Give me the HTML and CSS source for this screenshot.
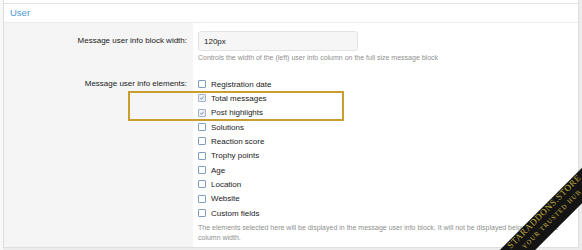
FILE: index.html
```html
<!DOCTYPE html>
<html>
<head>
    <title>Options: Messages</title>
    <link rel="stylesheet" href="styles.css">
</head>
<body>

<div class="page">
    <div class="prev-block"></div>
    <h3 class="section-head">User</h3>

    <dl class="form-row row-width">
        <dt><label for="infoWidth">Message user info block width:</label></dt>
        <dd>
            <input type="text" id="infoWidth" class="text-input" value="120px">
            <div class="hint">Controls the width of the (left) user info column on the full size message block</div>
        </dd>
    </dl>

    <dl class="form-row row-elements">
        <dt><label>Message user info elements:</label></dt>
        <dd>
            <ul class="check-list">
                <li><span class="box"></span>Registration date</li>
                <li><span class="box checked"><svg viewBox="0 0 8 8"><path d="M1.6 4.2 L3.3 5.8 L6.4 2.2"/></svg></span>Total messages</li>
                <li><span class="box checked"><svg viewBox="0 0 8 8"><path d="M1.6 4.2 L3.3 5.8 L6.4 2.2"/></svg></span>Post highlights</li>
                <li><span class="box"></span>Solutions</li>
                <li><span class="box"></span>Reaction score</li>
                <li><span class="box"></span>Trophy points</li>
                <li><span class="box"></span>Age</li>
                <li><span class="box"></span>Location</li>
                <li><span class="box"></span>Website</li>
                <li><span class="box"></span>Custom fields</li>
            </ul>
            <div class="hint">The elements selected here will be displayed in the message user info block. It will not be displayed below the single column width.</div>
        </dd>
    </dl>
</div>

<!-- annotation + watermark on top of the screenshot -->
<div class="highlight"></div>
<div class="ribbon">
    <span class="ribbon-title">STARADDONS.STORE</span>
    <span class="ribbon-sub">YOUR TRUSTED HUB</span>
</div>

</body>
</html>
```

FILE: styles.css
```css
html, body {
    height: 100%;
}
body {
    margin: 0;
    background: #ececec;
    border-left: 3px solid #f8f8f8;
    font-family: "Liberation Sans", Arial, sans-serif;
    color: #1a1a1a;
    overflow: hidden;
    position: relative;
}
.page {
    width: 574px;
    background: white;
    border-left: 1px solid #dedede;
    border-right: 1px solid #dedede;
    border-bottom: 1px solid #e0e0e0;
}
.prev-block {
    height: 3px;
    border-bottom: 1px solid #e2e2e2;
}
.section-head {
    margin: 0;
    height: 18px;
    line-height: 18px;
    padding-left: 6px;
    font-size: 9.5px;
    font-weight: normal;
    color: #4b97d3;
    border-bottom: 1px solid #ececec;
}
.form-row {
    display: grid;
    grid-template-columns: 189px 1fr;
    margin: 0;
}
.form-row dt {
    background: #f5f5f5;
    text-align: right;
    padding-right: 6px;
    font-size: 8px;
    color: #1a1a1a;
}
.form-row dd {
    margin: 0;
    padding-left: 5px;
    padding-right: 14px;
}
.row-width dt {
    padding-top: 8px;
    line-height: 20px;
}
.row-width dd {
    padding-top: 8px;
    padding-bottom: 7px;
}
.row-elements dt {
    padding-top: 8px;
    line-height: 14.33px;
}
.row-elements dd {
    padding-top: 8px;
    padding-bottom: 4.7px;
}
.text-input {
    display: block;
    width: 160px;
    height: 20px;
    box-sizing: border-box;
    margin: 0;
    padding: 0 5px;
    border: 1px solid #e4e4e4;
    border-radius: 3px;
    background: #f6f6f6;
    font-family: "Liberation Sans", Arial, sans-serif;
    font-size: 8px;
    color: #1a1a1a;
}
.hint {
    font-size: 7px;
    line-height: 9.5px;
    color: #8f8f8f;
    margin-top: 1.5px;
}
.row-elements .hint {
    margin-top: 3px;
}
.check-list {
    list-style: none;
    margin: 0;
    padding: 0;
}
.check-list li {
    display: flex;
    align-items: center;
    height: 14.33px;
    font-size: 8px;
    color: #1a1a1a;
}
.box {
    width: 8px;
    height: 8px;
    box-sizing: border-box;
    border: 1px solid #7e9fc2;
    border-radius: 1px;
    background: white;
    margin-right: 5px;
    display: flex;
}
.box.checked {
    background: #eef1f5;
    border-color: #9fb2c6;
}
.box svg {
    width: 6px;
    height: 6px;
    fill: none;
    stroke: #6f87a0;
    stroke-width: 1.3;
}
.highlight {
    position: absolute;
    left: 125px;
    top: 91px;
    width: 216px;
    height: 30px;
    box-sizing: border-box;
    border: 2px solid #c99d2e;
}
.ribbon {
    position: absolute;
    left: 426.75px;
    top: 205.25px;
    width: 240px;
    height: 25px;
    background: #141414;
    transform: rotate(-45deg);
    display: flex;
    flex-direction: column;
    align-items: center;
    font-family: "Liberation Serif", "Times New Roman", serif;
    color: #c4b23e;
}
.ribbon-title {
    font-size: 9px;
    line-height: 9px;
    letter-spacing: 0.6px;
}
.ribbon-sub {
    font-size: 6.5px;
    line-height: 8px;
    letter-spacing: 1px;
    margin-top: 2px;
}
```
